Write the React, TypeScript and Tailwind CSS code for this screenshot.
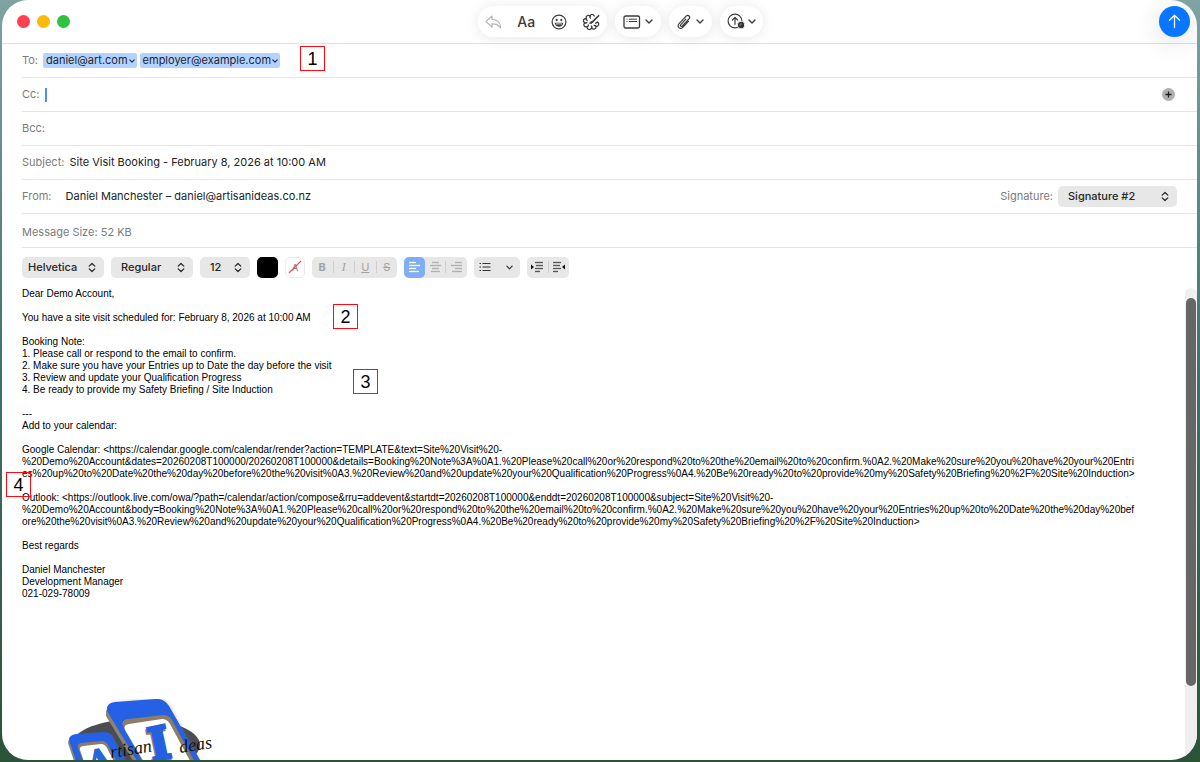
import React, { useState } from "react";

const bodyLines = [
    "Dear Demo Account,",
    "",
    "You have a site visit scheduled for: February 8, 2026 at 10:00 AM",
    "",
    "Booking Note:",
    "1. Please call or respond to the email to confirm.",
    "2. Make sure you have your Entries up to Date the day before the visit",
    "3. Review and update your Qualification Progress",
    "4. Be ready to provide my Safety Briefing / Site Induction",
    "",
    "---",
    "Add to your calendar:",
    "",
    "Google Calendar: <https://calendar.google.com/calendar/render?action=TEMPLATE&text=Site%20Visit%20-",
    "%20Demo%20Account&dates=20260208T100000/20260208T100000&details=Booking%20Note%3A%0A1.%20Please%20call%20or%20respond%20to%20the%20email%20to%20confirm.%0A2.%20Make%20sure%20you%20have%20your%20Entri",
    "es%20up%20to%20Date%20the%20day%20before%20the%20visit%0A3.%20Review%20and%20update%20your%20Qualification%20Progress%0A4.%20Be%20ready%20to%20provide%20my%20Safety%20Briefing%20%2F%20Site%20Induction>",
    "",
    "Outlook: <https://outlook.live.com/owa/?path=/calendar/action/compose&rru=addevent&startdt=20260208T100000&enddt=20260208T100000&subject=Site%20Visit%20-",
    "%20Demo%20Account&body=Booking%20Note%3A%0A1.%20Please%20call%20or%20respond%20to%20the%20email%20to%20confirm.%0A2.%20Make%20sure%20you%20have%20your%20Entries%20up%20to%20Date%20the%20day%20bef",
    "ore%20the%20visit%0A3.%20Review%20and%20update%20your%20Qualification%20Progress%0A4.%20Be%20ready%20to%20provide%20my%20Safety%20Briefing%20%2F%20Site%20Induction>",
    "",
    "Best regards",
    "",
    "Daniel Manchester",
    "Development Manager",
    "021-029-78009",
];

function Chevron({ className = "" }: { className?: string }) {
    return (
        <svg viewBox="0 0 8 5" className={className} fill="none" stroke="currentColor" strokeWidth="1.4" strokeLinecap="round" strokeLinejoin="round" aria-hidden="true">
            <path d="M1 1l3 3 3-3" />
        </svg>
    );
}

function UpDown() {
    return (
        <svg viewBox="0 0 8 10" className="pointer-events-none absolute top-[5px] right-2 h-[11px] w-[8px]" fill="none" stroke="#222" strokeWidth="1.2" strokeLinecap="round" strokeLinejoin="round" aria-hidden="true">
            <path d="M1.2 3.6L4 1l2.8 2.6M1.2 6.4L4 9l2.8-2.6" />
        </svg>
    );
}

function Picker({ label, options, className }: { label: string; options: string[]; className: string }) {
    return (
        <div className="relative">
            <select aria-label={label} className={`h-[21px] appearance-none rounded-[5px] bg-[#e7e7e7] text-[11px] font-medium text-[#262626] outline-none ${className}`}>
                {options.map((o) => (
                    <option key={o}>{o}</option>
                ))}
            </select>
            <UpDown />
        </div>
    );
}

function Field({ id, label, children }: { id?: string; label: string; children?: React.ReactNode }) {
    return (
        <div className="flex h-[34px] items-center border-b border-[#e6e6e6]">
            <label htmlFor={id} className="shrink-0 text-[#7b7b7b]">{label}</label>
            {children}
        </div>
    );
}

function Recipient({ address }: { address: string }) {
    return (
        <button className="flex h-[15px] items-center gap-px rounded-[2px] bg-[#b3d2ff] pr-[2px] pl-[3px] text-[#1d2530]">
            {address}
            <Chevron className="h-[4px] w-[6px]" />
        </button>
    );
}

function Callout({ n, className }: { n: number; className: string }) {
    return (
        <span className={`absolute flex h-[25px] w-[25px] items-center justify-center border border-[#ff0a14] font-['Liberation_Sans',sans-serif] text-[18px] leading-none text-black ${className}`}>
            {n}
        </span>
    );
}

// x1/x2 pairs, one per line of the paragraph glyph
function Lines({ rows, arrow, width = 13 }: { rows: number[][]; arrow?: string; width?: number }) {
    return (
        <svg width={width} height="12" viewBox={`0 0 ${width} 12`} stroke="currentColor" strokeWidth="1.3" aria-hidden="true">
            {rows.map(([a, b], i) => (
                <path key={i} d={`M${a} ${1.5 + i * 3}H${b}`} />
            ))}
            {arrow && <path d={arrow} fill="#111" stroke="none" />}
        </svg>
    );
}

function Logo() {
    return (
        <svg viewBox="0 0 150 76" className="h-[76px] w-[150px]" role="img" aria-label="Artisan Ideas">
            <defs>
                <linearGradient id="blue" x1="0" y1="0" x2="1" y2="1">
                    <stop offset="0" stopColor="#2460e8" />
                    <stop offset="1" stopColor="#2a63d8" />
                </linearGradient>
                <filter id="soft" x="-20%" y="-20%" width="140%" height="140%">
                    <feGaussianBlur stdDeviation="2" />
                </filter>
            </defs>
            <ellipse cx="68" cy="46" rx="64" ry="26" fill="#4c4d52" />
            <path d="M40 12Q38 6 46 4L86 0Q97-1 102 8L140 76H76z" fill="#777" opacity=".4" filter="url(#soft)" />
            <path d="M38 17Q37 7 47 6L87 3Q96 2 101 10L141 80H76z" fill="#8d8371" />
            <path d="M39 12Q38 4 47 3L87 0Q96-1 101 7L143 80H80z" fill="url(#blue)" />
            <path d="M55 27Q53 21 60 20L95 16Q101 16 104 21L136 80H84z" fill="#8d7c66" />
            <path d="M57 31Q55 26 61 25L94 20Q99 20 102 25L132 80H86z" fill="#fff" />
            <path d="M0 44Q0 39 7 38L35 36Q41 36 44 41L64 80H12z" fill="#8d8371" />
            <path d="M1 41Q1 36 8 35L36 33Q42 33 45 38L68 80H14z" fill="url(#blue)" />
            <path d="M10 49Q9 45 13 44L34 42Q38 42 40 46L58 80H22z" fill="#8d7c66" />
            <path d="M12 51Q11 48 15 47L33 45Q37 45 39 49L55 80H22z" fill="#fff" />
            <g fontFamily="'DejaVu Serif', serif" fontWeight="bold" strokeWidth="3">
                <text x="80" y="62" fontSize="45" fill="#937b5e" stroke="#937b5e" transform="rotate(-12 92 46)">I</text>
                <text x="81" y="60" fontSize="45" fill="#2460df" stroke="#2460df" transform="rotate(-12 92 46)">I</text>
            </g>
            <g fontFamily="'DejaVu Serif', serif" fontWeight="bold" strokeWidth="1">
                <text x="19" y="74" fontSize="32" fill="#937b5e" stroke="#937b5e" transform="rotate(-12 32 62)">A</text>
                <text x="19" y="73" fontSize="32" fill="#2864df" stroke="#2864df" transform="rotate(-12 32 62)">A</text>
            </g>
            <g fontFamily="'Liberation Serif', serif" fontStyle="italic" fontSize="18" fill="#111">
                <text x="43" y="59" transform="rotate(-9 43 59)">rtisan</text>
                <text x="112" y="54" transform="rotate(-9 112 54)">deas</text>
            </g>
        </svg>
    );
}

export default function App() {
    const [cc, setCc] = useState("");
    const [bcc, setBcc] = useState("");
    const [subject, setSubject] = useState("Site Visit Booking - February 8, 2026 at 10:00 AM");
    const [from, setFrom] = useState("Daniel Manchester – daniel@artisanideas.co.nz");

    const pill = "flex h-[31px] items-center rounded-full bg-white shadow-[0_1px_14px_rgba(0,0,0,0.1)]";

    return (
        <div className="flex h-screen overflow-hidden bg-linear-to-b from-[#7fa3a2] via-[#3f7068] to-[#2c5338] pr-[3px] pb-[2px] pl-[2px] font-['Inter',sans-serif] text-[11px] leading-[15px]">
            <main className="relative flex min-w-0 flex-1 flex-col overflow-hidden rounded-[26px] bg-white">
                <header className="flex h-[44px] shrink-0 items-center justify-between border-b border-[#e1e1e1] pr-[7px] pl-[15px]">
                    <div className="flex gap-[7px] pr-3">
                        <button aria-label="Close" className="h-[13px] w-[13px] rounded-full bg-[#ff4050]" />
                        <button aria-label="Minimize" className="h-[13px] w-[13px] rounded-full bg-[#f9ba0b]" />
                        <button aria-label="Zoom" className="h-[13px] w-[13px] rounded-full bg-[#2fc142]" />
                    </div>

                    <div className="flex gap-2 text-[#3b3b3b]">
                        <div className={`${pill} w-[129px] justify-between px-[7px]`}>
                            <button aria-label="Reply" className="text-[#b5b5b5]">
                                <svg width="17" height="14" viewBox="0 0 17 14" fill="none" stroke="currentColor" strokeWidth="1.2" strokeLinejoin="round">
                                    <path d="M7 1L1 6.5 7 12V8.900C11 8.800 13.500 9.800 15.700 13 15.700 8 12.500 4.500 7 4.300z" />
                                </svg>
                            </button>
                            <button className="text-[14px] font-medium">Aa</button>
                            <button aria-label="Emoji">
                                <svg width="16" height="16" viewBox="0 0 16 16" fill="none" stroke="currentColor" strokeWidth="1.2">
                                    <circle cx="8" cy="8" r="6.900" />
                                    <path d="M3.700 8.800h8.600c-.3 2.500-2.100 4-4.300 4s-4-1.500-4.300-4z" fill="currentColor" stroke="none" />
                                    <path d="M5 9.900h6" stroke="#fff" strokeWidth=".8" />
                                    <ellipse cx="5.700" cy="6" rx="1" ry="1.300" fill="currentColor" stroke="none" />
                                    <ellipse cx="10.300" cy="6" rx="1" ry="1.300" fill="currentColor" stroke="none" />
                                </svg>
                            </button>
                            <button aria-label="Create image">
                                <svg width="18" height="18" viewBox="0 0 17 17" fill="none" stroke="currentColor" strokeWidth="1.200" strokeLinecap="round">
                                    <path d="M11.600 2.800C10.500.6 8 .7 7.700 3 5.700 1.400 3.200 2.700 4 5.200 1.300 5.200.2 7.700 2.600 9.200.8 11 2 13.500 4.600 13c.2 2.800 3.200 3.600 4.500 1.300 1.700 1.800 4.400.9 4.200-1.500 2.600-.2 3.400-2.800 1.400-4.200" />
                                    <path d="M7.700 3c-.5.8-.3 1.500.3 1.900M4 5.200c-.2 1 .3 1.500 1 1.700M2.600 9.200c.8.600 1.600.4 2-.3M4.600 13c1.100-.2 1.500-.9 1.300-1.700M9.100 14.300c.5-.8.300-1.600-.4-2M13.300 12.800c-.3-.9-1-1.200-1.800-.9M14.700 8.600c-1 0-1.600.5-1.700 1.200" />
                                    <path d="M15.700 2.600L9.900 8.400" strokeWidth="1.600" />
                                    <path d="M9.700 8c-1.300-.2-1.800.8-2.700 1.700 1.400.6 2.900.1 3-1.200z" fill="currentColor" strokeWidth=".8" />
                                </svg>
                            </button>
                        </div>
                        <button aria-label="Header fields" className={`${pill} w-[46px] justify-between px-2`}>
                            <svg width="18" height="14" viewBox="0 0 18 14" fill="none" stroke="currentColor" strokeWidth="1.3">
                                <rect x="1" y="1" width="15.500" height="12" rx="1.500" />
                                <path d="M3.500 4.200h1M5.800 4.200H14M3.500 6.500h1M5.800 6.500H14" strokeWidth="1" />
                            </svg>
                            <Chevron className="h-[5px] w-[8px]" />
                        </button>
                        <button aria-label="Attach" className={`${pill} w-[43px] justify-between px-2`}>
                            <svg width="15" height="16" viewBox="0 0 15 16" fill="none" stroke="currentColor" strokeWidth="1.200" strokeLinecap="round">
                                <path d="M11.400 7.300l-5.600 6c-1.200 1.200-2.800 1.300-3.900.3s-1-2.600.2-3.900l7-7.500c.9-.9 2.200-1 3-.2s.8 2-.1 2.900l-6.700 7.100c-.5.6-1.200.6-1.600.2s-.4-1 .1-1.600l5-5.400" />
                            </svg>
                            <Chevron className="h-[5px] w-[8px]" />
                        </button>
                        <button aria-label="Send later" className={`${pill} w-[43px] justify-between px-[7px]`}>
                            <svg width="18" height="17" viewBox="0 0 18 17" fill="none" stroke="currentColor" strokeWidth="1.200" strokeLinecap="round" strokeLinejoin="round">
                                <circle cx="8" cy="8" r="6.900" />
                                <path d="M8 11.300V4.500M5.400 7L8 4.400 10.600 7" />
                                <circle cx="14" cy="12" r="3.700" fill="#333" stroke="#fff" strokeWidth=".8" />
                                <path d="M14 10.300V12h-1.300" stroke="#ccc" strokeWidth=".5" />
                            </svg>
                            <Chevron className="h-[5px] w-[8px]" />
                        </button>
                    </div>

                    <button aria-label="Send" className="flex h-[31px] w-[31px] items-center justify-center rounded-full bg-[#0876ff] text-white shadow-[0_4px_28px_rgba(0,0,0,0.14)]">
                        <svg width="13" height="15" viewBox="0 0 13 15" fill="none" stroke="currentColor" strokeWidth="1.3" strokeLinecap="round" strokeLinejoin="round">
                            <path d="M6.500 13.500V1.200M1.500 6.200l5-5 5 5" />
                        </svg>
                    </button>
                </header>

                <section className="shrink-0 pl-5">
                    <Field label="To:">
                        <div className="ml-[5px] flex gap-[3px]">
                            <Recipient address="daniel@art.com" />
                            <Recipient address="employer@example.com" />
                        </div>
                    </Field>
                    <Field id="cc" label="Cc:">
                        <div className="ml-[5px] h-[14px] w-[2px] bg-[#4c8df6]" />
                        <input id="cc" value={cc} onChange={(e) => setCc(e.target.value)} className="min-w-0 flex-1 outline-none" />
                        <button aria-label="Add contact" className="mr-[22px] flex h-[13px] w-[13px] items-center justify-center rounded-full bg-[#b0b0b0]">
                            <svg width="7" height="7" viewBox="0 0 7 7" stroke="#222" strokeWidth="1.300">
                                <path d="M3.500.5v6M.5 3.500h6" />
                            </svg>
                        </button>
                    </Field>
                    <Field id="bcc" label="Bcc:">
                        <input id="bcc" value={bcc} onChange={(e) => setBcc(e.target.value)} className="ml-[5px] min-w-0 flex-1 outline-none" />
                    </Field>
                    <Field id="subject" label="Subject:">
                        <input id="subject" value={subject} onChange={(e) => setSubject(e.target.value)} className="ml-[5px] min-w-0 flex-1 text-[#222] outline-none" />
                    </Field>
                    <Field id="from" label="From:">
                        <input id="from" value={from} onChange={(e) => setFrom(e.target.value)} className="ml-[14px] min-w-0 flex-1 text-[#222] outline-none" />
                        <span className="mr-[5px] text-[#7b7b7b]">Signature:</span>
                        <div className="mr-5">
                            <Picker label="Signature" options={["Signature #2", "None"]} className="w-[119px] pl-[10px]" />
                        </div>
                    </Field>
                    <div className="flex h-[34px] items-center border-b border-[#e6e6e6] pt-[3px] text-[#7b7b7b]">Message Size: 52 KB</div>
                </section>

                <div className="flex h-[38px] shrink-0 items-center gap-[7px] pl-5">
                    <Picker label="Font" options={["Helvetica", "Arial"]} className="w-[82px] pl-[6px]" />
                    <Picker label="Style" options={["Regular", "Bold"]} className="w-[82px] pl-[10px]" />
                    <Picker label="Size" options={["12", "14"]} className="w-[50px] pl-[10px]" />
                    <button aria-label="Text color" className="h-[21px] w-[21px] rounded-[5px] bg-black" />
                    <button aria-label="Background color" className="flex h-[21px] w-[20px] items-center justify-center rounded-[5px] border border-[#ececec]">
                        <svg width="14" height="14" viewBox="0 0 14 14" aria-hidden="true">
                            <text x="4" y="11" fontSize="9" fill="#777">A</text>
                            <path d="M1 13L13 1" stroke="#ff4a55" strokeWidth="1.300" />
                        </svg>
                    </button>
                    <div className="flex h-[21px] w-[85px] items-center rounded-[5px] bg-[#e7e7e7] text-[#a3a3a3]">
                        <button className="flex-1 font-bold">B</button>
                        <span className="h-3 w-px bg-[#cfcfcf]" />
                        <button className="flex-1 font-['Liberation_Serif',serif] text-[12px] italic">I</button>
                        <span className="h-3 w-px bg-[#cfcfcf]" />
                        <button className="flex-1 underline">U</button>
                        <span className="h-3 w-px bg-[#cfcfcf]" />
                        <button className="flex-1 line-through">S</button>
                    </div>
                    <div className="flex h-[21px] w-[63px] items-center rounded-[5px] bg-[#e7e7e7] text-[#b0b0b0]">
                        <button aria-label="Align left" className="flex h-full flex-1 items-center justify-center rounded-[5px] bg-[#80aef2] text-white">
                            <Lines rows={[[1, 8], [1, 12], [1, 8], [1, 11]]} />
                        </button>
                        <button aria-label="Align center" className="flex flex-1 justify-center">
                            <Lines rows={[[3, 10], [1, 12], [3, 10], [2, 11]]} />
                        </button>
                        <span className="h-3 w-px bg-[#cfcfcf]" />
                        <button aria-label="Align right" className="flex flex-1 justify-center">
                            <Lines rows={[[5, 12], [1, 12], [5, 12], [2, 12]]} />
                        </button>
                    </div>
                    <button aria-label="List" className="flex h-[21px] w-[46px] items-center justify-between rounded-[5px] bg-[#e7e7e7] pr-[7px] pl-[5px] text-[#333]">
                        <svg width="12" height="10" viewBox="0 0 12 10" stroke="currentColor" strokeWidth="1.200" aria-hidden="true">
                            <path d="M.5 1.500H2M3.500 1.500h8M.5 5H2M3.500 5h8M.5 8.500H2M3.500 8.500h8" />
                        </svg>
                        <Chevron className="h-[5px] w-[7px]" />
                    </button>
                    <div className="flex h-[21px] w-[42px] items-center rounded-[5px] bg-[#e7e7e7] text-[#555]">
                        <button aria-label="Increase indent" className="flex flex-1 justify-center">
                            <Lines width={14} rows={[[5, 13], [6, 13], [5, 13], [5, 10]]} arrow="M1 3.500l3 2.500-3 2.500z" />
                        </button>
                        <span className="h-3 w-px bg-[#cfcfcf]" />
                        <button aria-label="Decrease indent" className="flex flex-1 justify-center">
                            <Lines width={14} rows={[[1, 9], [1, 8], [1, 9], [1, 6]]} arrow="M13 3.500l-3 2.500 3 2.500z" />
                        </button>
                    </div>
                </div>

                <div className="flex min-h-0 flex-1 pt-[2px]">
                    <div className="flex min-w-0 flex-1 flex-col overflow-hidden pl-5">
                        <div className="shrink-0 font-['Liberation_Sans',Helvetica,sans-serif] text-[10px] leading-[12px] whitespace-pre text-black">
                            {bodyLines.map((line, i) => (
                                <p key={i} className="h-3">{line}</p>
                            ))}
                        </div>
                        <div className="mt-[99px] ml-[46px] shrink-0">
                            <Logo />
                        </div>
                    </div>
                    <div className="w-[12px] shrink-0 rounded-t-full bg-[#efefef] px-px pt-[10px]">
                        <div className="h-[84%] rounded-full bg-[#666]" />
                    </div>
                </div>

                <Callout n={1} className="top-[46px] left-[298px]" />
                <Callout n={2} className="top-[304px] left-[331px]" />
                <Callout n={3} className="top-[369px] left-[351px]" />
                <Callout n={4} className="top-[472px] left-[4px]" />
            </main>
        </div>
    );
}
